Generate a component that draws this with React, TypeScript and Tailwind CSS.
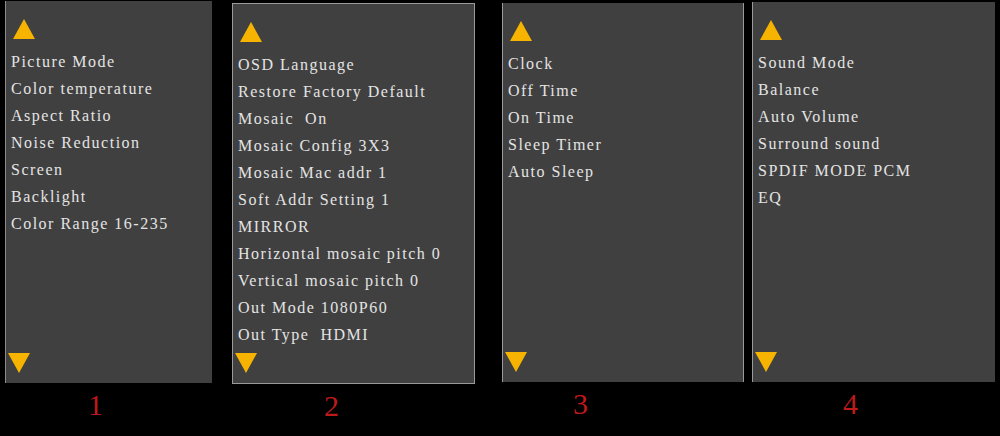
import React from 'react';

type Panel = {
  label: string;
  items: string[];
  col: string; // column placement
  box: string; // panel size
  labelPad: string;
};

const panels: Panel[] = [
  {
    label: '1',
    items: [
      'Picture Mode',
      'Color temperature',
      'Aspect Ratio',
      'Noise Reduction',
      'Screen',
      'Backlight',
      'Color Range 16-235',
    ],
    col: 'ml-[5px] pt-[1px]',
    box: 'w-[207px] h-[382px] border-l border-[#8c8c8c]',
    labelPad: 'pl-[83px]',
  },
  {
    label: '2',
    items: [
      'OSD Language',
      'Restore Factory Default',
      'Mosaic  On',
      'Mosaic Config 3X3',
      'Mosaic Mac addr 1',
      'Soft Addr Setting 1',
      'MIRROR',
      'Horizontal mosaic pitch 0',
      'Vertical mosaic pitch 0',
      'Out Mode 1080P60',
      'Out Type  HDMI',
    ],
    col: 'ml-[20px] pt-[3px]',
    box: 'w-[243px] h-[381px] border border-[#9a9a9a]',
    labelPad: 'pl-[92px]',
  },
  {
    label: '3',
    items: ['Clock', 'Off Time', 'On Time', 'Sleep Timer', 'Auto Sleep'],
    col: 'ml-[27px] pt-[3px]',
    box: 'w-[242px] h-[379px] border-l border-r border-[#9a9a9a]',
    labelPad: 'pl-[71px]',
  },
  {
    label: '4',
    items: ['Sound Mode', 'Balance', 'Auto Volume', 'Surround sound', 'SPDIF MODE PCM', 'EQ'],
    col: 'ml-[8px] pt-[2px]',
    box: 'w-[243px] h-[380px] border-l border-[#9a9a9a]',
    labelPad: 'pl-[91px]',
  },
];

function Up() {
  return (
    <svg width="22" height="20" viewBox="0 0 22 20" className="block">
      <polygon points="11,0 22,20 0,20" fill="#f6b400" />
    </svg>
  );
}

function Down() {
  return (
    <svg width="22" height="20" viewBox="0 0 22 20" className="block">
      <polygon points="0,0 22,0 11,20" fill="#f6b400" />
    </svg>
  );
}

export default function App() {
  return (
    <div className="w-[1000px] h-[436px] bg-black flex items-start overflow-hidden">
      {panels.map((p) => (
        <div key={p.label} className={`flex flex-col ${p.col}`}>
          <div className={`${p.box} bg-[#404040] flex flex-col pt-[18px] pb-[10px] pl-[7px]`}>
            <div>
              <Up />
            </div>
            {/* menu entries */}
            <div className="mt-[9px] -ml-[2px] flex flex-col">
              {p.items.map((t) => (
                <div
                  key={t}
                  className="h-[27px] leading-[27px] text-[16px] tracking-[1.5px] text-[#e4e4e4] whitespace-pre"
                  style={{ fontFamily: '"Liberation Serif", "DejaVu Serif", serif' }}
                >
                  {t}
                </div>
              ))}
            </div>
            <div className="mt-auto -ml-[5px]">
              <Down />
            </div>
          </div>
          <div
            className={`${p.labelPad} mt-[7px] h-[30px] leading-[30px] text-[30px] text-[#bd1a1a]`}
            style={{ fontFamily: '"Liberation Serif", serif' }}
          >
            {p.label}
          </div>
        </div>
      ))}
    </div>
  );
}
